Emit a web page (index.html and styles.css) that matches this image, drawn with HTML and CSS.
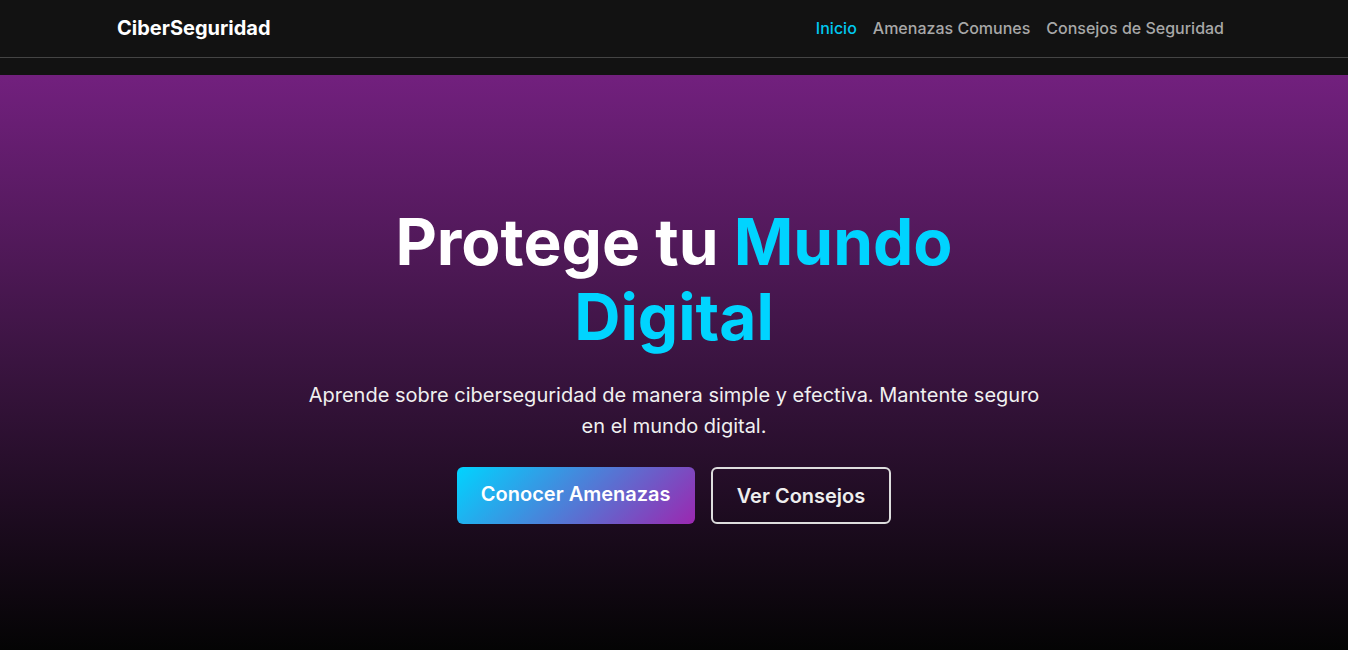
FILE: index.html
```html
<!DOCTYPE html>
<html lang="es">
<head>
<meta charset="utf-8">
<title>CiberSeguridad</title>
<link rel="stylesheet" href="styles.css">
</head>
<body>
<header class="site-header">
  <div class="container nav-bar">
    <a class="logo" href="#">CiberSeguridad</a>
    <nav class="nav-links">
      <a class="nav-link active" href="#">Inicio</a>
      <a class="nav-link" href="#">Amenazas Comunes</a>
      <a class="nav-link" href="#">Consejos de Seguridad</a>
    </nav>
  </div>
</header>
<main>
  <section class="hero">
    <div class="hero-content">
      <h1 class="hero-title">Protege tu <span class="accent">Mundo Digital</span></h1>
      <p class="hero-text">Aprende sobre ciberseguridad de manera simple y efectiva. Mantente seguro en el mundo digital.</p>
      <div class="hero-actions">
        <a class="btn btn-primary" href="#">Conocer Amenazas</a>
        <a class="btn btn-outline" href="#">Ver Consejos</a>
      </div>
    </div>
  </section>
</main>
</body>
</html>
```
FILE: styles.css
```css
* { box-sizing: border-box; }
html, body { margin: 0; padding: 0; }
body {
  background: #121212;
  color: #fff;
  font-family: Inter, "Liberation Sans", sans-serif;
}
a { text-decoration: none; }
.container {
  max-width: 1114px;
  margin: 0 auto;
}
.site-header {
  background: #121212;
  border-bottom: 1px solid #444;
  margin-bottom: 17px;
}
.nav-bar {
  height: 57px;
  display: flex;
  align-items: center;
  justify-content: space-between;
  padding-right: 7px;
  padding-bottom: 2px;
}
.logo {
  color: #fff;
  font-weight: 700;
  font-size: 20px;
}
.nav-links {
  display: flex;
  gap: 16px;
}
.nav-link {
  color: #a8a8a8;
  font-size: 16px;
  font-weight: 500;
}
.nav-link.active { color: #00c8f0; }
.hero {
  min-height: calc(100vh - 75px);
  background: linear-gradient(180deg, #72207e 0%, #3a1440 50%, #040404 100%);
  display: flex;
  justify-content: center;
  padding-top: 129px;
  text-align: center;
}
.hero-content {
  max-width: 800px;
  display: flex;
  flex-direction: column;
  align-items: center;
}
.hero-title {
  margin: 0;
  font-size: 64px;
  font-weight: 700;
  line-height: 75px;
  max-width: 600px;
}
.accent { color: #00d4ff; }
.hero-text {
  margin: 25.5px 0 25.5px;
  font-size: 20px;
  line-height: 31px;
  max-width: 750px;
  color: #f0f0f0;
}
.hero-actions {
  display: flex;
  gap: 16px;
}
.btn {
  display: inline-flex;
  align-items: center;
  justify-content: center;
  height: 57px;
  border-radius: 6px;
  font-size: 20px;
  font-weight: 600;
  padding: 0 24px;
}
.btn-primary {
  color: #fff;
  background: linear-gradient(135deg, #00d4ff 0%, #9c27b0 100%);
  padding-bottom: 3px;
  min-width: 238px;
}
.btn-outline {
  color: #eee;
  border: 2px solid #ddd;
  min-width: 180px;
}
```
